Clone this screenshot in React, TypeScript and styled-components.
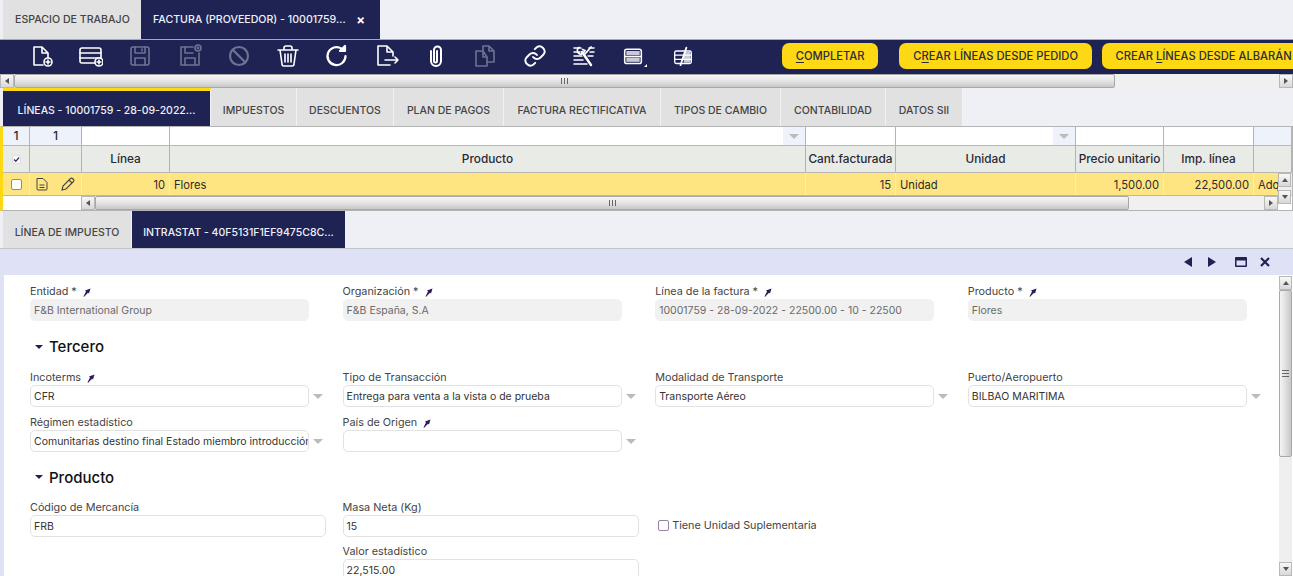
import React from 'react'
import styled, { createGlobalStyle } from 'styled-components'

const navy = '#1f2353'
const yellow = '#fdd813'
const gridCols = '27px 52px 88px 636px 90px 180px 88px 90px 1fr'

const Global = createGlobalStyle`
  html, body { margin: 0; padding: 0; height: 100%; overflow: hidden; background: #fff; }
  body { font-family: Inter, "Open Sans", "Liberation Sans", sans-serif; font-size: 11px; color: #3a3a3a; }
  * { box-sizing: border-box; }
`

const Page = styled.div`
  width: 1293px;
  height: 576px;
  overflow: hidden;
  background: #eef0f6;
  display: flex;
  flex-direction: column;
`

// pestañas de arriba
const TopTabs = styled.div`
  height: 39px;
  padding-left: 3px;
  display: flex;
  flex: none;
`
const TopTab = styled.div<{ $active?: boolean }>`
  height: 39px;
  padding: 0 12px;
  width: ${(p) => (p.$active ? '239px' : '138px')};
  display: flex;
  align-items: center;
  justify-content: space-between;
  font-size: 10.6px;
  font-weight: 500;
  white-space: nowrap;
  background: ${(p) => (p.$active ? navy : '#e1e1e1')};
  color: ${(p) => (p.$active ? '#f0f0f8' : '#444')};
`
const CloseMark = styled.span`
  font-size: 13px;
  font-weight: 700;
  color: #fff;
  margin-right: 3px;
`

const Toolbar = styled.div`
  height: 35px;
  flex: none;
  background: ${navy};
  border-top: 1px solid #aaa;
  display: flex;
  align-items: center;
  padding: 0 0 2px 17px;
  overflow: hidden;
`
const ToolIcon = styled.div<{ $off?: boolean }>`
  width: 49.3px;
  flex: none;
  display: flex;
  justify-content: center;
  color: ${(p) => (p.$off ? '#6f7290' : '#fff')};
  position: relative;
`
const Corner = styled.i`
  position: absolute;
  right: 11px;
  bottom: -1px;
  border-style: solid;
  border-width: 0 0 3px 3px;
  border-color: transparent transparent #fff transparent;
`
const ToolButtons = styled.div`
  margin-left: 75px;
  display: flex;
  flex: none;
`
const ActionBtn = styled.div<{ $w: number; $gap: number }>`
  width: ${(p) => p.$w}px;
  margin-right: ${(p) => p.$gap}px;
  height: 26px;
  flex: none;
  border-radius: 7px;
  background: ${yellow};
  color: #2c2c3e;
  font-size: 11.2px;
  font-weight: 500;
  display: flex;
  align-items: center;
  justify-content: center;
  white-space: nowrap;
  u { text-underline-offset: 2px; }
`

// barras de scroll clasicas
const HBar = styled.div<{ $left?: number }>`
  height: 14px;
  flex: none;
  margin-left: ${(p) => p.$left || 0}px;
  display: flex;
  background: #f0f0f0;
`
const ScrollBtn = styled.div`
  width: 14px;
  height: 14px;
  flex: none;
  background: linear-gradient(#f8f8f8, #d8d8d8);
  border: 1px solid #b8b8b8;
  display: flex;
  align-items: center;
  justify-content: center;
`
const Arrow = styled.i<{ $dir: 'l' | 'r' | 'u' | 'd' }>`
  width: 0;
  height: 0;
  border-style: solid;
  border-color: transparent;
  ${(p) => (p.$dir === 'l' ? 'border-width: 3px 4px 3px 0; border-right-color: #555;' : '')}
  ${(p) => (p.$dir === 'r' ? 'border-width: 3px 0 3px 4px; border-left-color: #555;' : '')}
  ${(p) => (p.$dir === 'u' ? 'border-width: 0 3px 4px 3px; border-bottom-color: #555;' : '')}
  ${(p) => (p.$dir === 'd' ? 'border-width: 4px 3px 0 3px; border-top-color: #555;' : '')}
`
const HThumb = styled.div<{ $w: number }>`
  width: ${(p) => p.$w}px;
  flex: none;
  height: 14px;
  background: linear-gradient(#f6f6f6, #e6e6e6 45%, #c8c8c8);
  border: 1px solid #a8a8a8;
  border-radius: 2px;
  display: flex;
  align-items: center;
  justify-content: center;
`
const HGrip = styled.span`
  width: 7px;
  height: 6px;
  background: repeating-linear-gradient(90deg, #666 0 1px, transparent 1px 3px);
`
const Fill = styled.div`
  flex: 1;
  min-width: 0;
`
const VBar = styled.div<{ $h: number; $top: number }>`
  position: absolute;
  right: 1px;
  top: ${(p) => p.$top}px;
  width: 13px;
  height: ${(p) => p.$h}px;
  display: flex;
  flex-direction: column;
  background: #efefef;
`
const VBtn = styled(ScrollBtn)`
  width: 13px;
`
const VThumb = styled.div<{ $h: number }>`
  height: ${(p) => p.$h}px;
  flex: none;
  background: linear-gradient(90deg, #f4f4f4, #e2e2e2 45%, #c8c8c8);
  border: 1px solid #a8a8a8;
  border-radius: 2px;
  display: flex;
  align-items: center;
  justify-content: center;
`
const VGrip = styled.span`
  width: 7px;
  height: 7px;
  background: repeating-linear-gradient(#666 0 1px, transparent 1px 3px);
`

// pestañas del detalle
const TabStrip = styled.div<{ $h: number }>`
  height: ${(p) => p.$h}px;
  flex: none;
  padding-left: 3px;
  display: flex;
`
const DocTab = styled.div<{ $active?: boolean; $marked?: boolean; $w: number }>`
  width: ${(p) => p.$w}px;
  display: flex;
  align-items: center;
  justify-content: center;
  padding-top: ${(p) => (p.$marked ? 3 : 6)}px;
  font-size: 10.5px;
  font-weight: 500;
  white-space: nowrap;
  border-right: 1px solid #f2f2f6;
  background: ${(p) => (p.$active ? navy : '#e1e1e1')};
  color: ${(p) => (p.$active ? '#f0f0f8' : '#444')};
  border-top: ${(p) => (p.$marked ? `3px solid ${yellow}` : 'none')};
`

const GridWrap = styled.div`
  height: 85px;
  flex: none;
  border-left: 3px solid ${yellow};
  border-top: 1px solid #b4b4b4;
  border-bottom: 1px solid #b4b4b4;
  border-right: 1px solid #b4b4b4;
  background: #fff;
  position: relative;
  display: flex;
  flex-direction: column;
`
const GridRow = styled.div<{ $h: number; $bg: string }>`
  display: grid;
  grid-template-columns: ${gridCols};
  height: ${(p) => p.$h}px;
  flex: none;
  background: ${(p) => p.$bg};
  border-bottom: 1px solid #b8b8b0;
`
const FilterCell = styled.div<{ $bg?: string; $center?: boolean }>`
  background: ${(p) => p.$bg || '#fff'};
  border-right: 1px solid #b4b4ac;
  color: #223;
  font-size: 11.4px;
  font-weight: 500;
  display: flex;
  align-items: center;
  justify-content: ${(p) => (p.$center ? 'center' : 'flex-end')};
`
const FilterDrop = styled.span`
  width: 22px;
  height: 100%;
  background: #eef2fa;
  display: flex;
  align-items: center;
  justify-content: center;
`
const DropArrow = styled.i`
  width: 0;
  height: 0;
  border-style: solid;
  border-width: 5px 5px 0 5px;
  border-color: #bbb transparent transparent transparent;
`
const HeadCell = styled.div`
  border-right: 1px solid #b4b4ac;
  display: flex;
  align-items: center;
  justify-content: center;
  font-size: 11.8px;
  font-weight: 500;
  color: #2a2a33;
  white-space: nowrap;
  overflow: hidden;
`
const RowCell = styled.div<{ $right?: boolean }>`
  border-right: 1px solid #ffeeb0;
  display: flex;
  align-items: center;
  justify-content: ${(p) => (p.$right ? 'flex-end' : 'flex-start')};
  padding: 1px 4px 0;
  font-size: 11.2px;
  color: #2c2c2c;
  white-space: nowrap;
  overflow: hidden;
`
const RowIcons = styled(RowCell)`
  gap: 13px;
  padding: 0 0 0 6px;
`
const CheckCell = styled(RowCell)`
  padding: 0 0 0 8px;
`
const Check = styled.span<{ $small?: boolean }>`
  width: ${(p) => (p.$small ? 9 : 11)}px;
  height: ${(p) => (p.$small ? 9 : 11)}px;
  flex: none;
  display: flex;
  align-items: center;
  justify-content: center;
  background: #fff;
  border: 1px solid ${(p) => (p.$small ? '#ddd' : '#9a80a8')};
  border-radius: 2px;
`
const GridBottom = styled.div`
  display: flex;
  height: 14px;
  flex: none;
`
const GridScroll = styled(HBar)`
  flex: 1;
  margin-right: 14px;
`

const DetailHead = styled.div`
  height: 27px;
  flex: none;
  background: #dfe1f6;
  border-top: 1px solid #c4c4cc;
  display: flex;
  align-items: center;
  justify-content: flex-end;
  gap: 16px;
  padding-right: 23px;
  color: ${navy};
`
const HeadArrow = styled.i<{ $dir: 'l' | 'r' }>`
  width: 0;
  height: 0;
  border-style: solid;
  border-color: transparent;
  ${(p) =>
    p.$dir === 'l'
      ? `border-width: 5px 8px 5px 0; border-right-color: ${navy};`
      : `border-width: 5px 0 5px 8px; border-left-color: ${navy};`}
`
const WinIcon = styled.svg`
  margin-left: 3px;
`
const CloseIcon = styled.svg`
  margin-left: -3px;
`
const FormPane = styled.div`
  flex: 1;
  min-height: 0;
  border-left: 4px solid #dfe1f6;
  background: #fff;
  position: relative;
  padding: 8px 0 0 26px;
  overflow: hidden;
`
const FieldGrid = styled.div<{ $row?: number }>`
  display: grid;
  grid-template-columns: repeat(4, 312.6px);
  grid-auto-rows: ${(p) => p.$row || 45}px;
`
const Field = styled.div`
  display: flex;
  flex-direction: column;
`
const Label = styled.label`
  height: 16px;
  padding-top: 2px;
  line-height: 14px;
  font-size: 10.8px;
  color: #444;
  white-space: nowrap;
  display: flex;
  align-items: center;
  gap: 5px;
`
const Control = styled.div<{ $wide?: boolean; $ro?: boolean }>`
  width: ${(p) => (p.$wide ? 296 : 279)}px;
  height: 22px;
  flex: none;
  border-radius: 5px;
  border: 1px solid ${(p) => (p.$ro ? '#f1f1f1' : '#e2e2e2')};
  background: ${(p) => (p.$ro ? '#f1f1f1' : '#fff')};
  color: ${(p) => (p.$ro ? '#6a6a6a' : '#333')};
  font-size: 10.5px;
  padding: 0 3px;
  display: flex;
  align-items: center;
  white-space: nowrap;
  overflow: hidden;
`
const ControlRow = styled.div`
  display: flex;
  align-items: center;
  gap: 4px;
`
const Drop = styled.span`
  display: flex;
  align-items: center;
`
const Section = styled.div<{ $h: number }>`
  height: ${(p) => p.$h}px;
  display: flex;
  align-items: center;
  gap: 6px;
  padding: 0 0 4px 5px;
  font-size: 15px;
  font-weight: 500;
  color: #111;
`
const SectionArrow = styled.i`
  width: 0;
  height: 0;
  border-style: solid;
  border-width: 4px 4px 0 4px;
  border-color: #2a1a55 transparent transparent transparent;
`
const CheckField = styled.div`
  display: flex;
  align-items: center;
  gap: 3px;
  padding: 8px 0 0 3px;
  font-size: 10.8px;
  color: #444;
`

const Svg = ({ children, w = 24, h = 24, sw = 1.6 }: any) => (
  <svg width={w} height={h} viewBox="0 0 24 24" fill="none" stroke="currentColor" strokeWidth={sw} strokeLinecap="round" strokeLinejoin="round">
    {children}
  </svg>
)
const Plus = ({ x, y }: { x: number; y: number }) => (
  <>
    <circle cx={x} cy={y} r="4" fill={navy} />
    <path d={`M${x - 2} ${y}h4M${x} ${y - 2}v4`} />
  </>
)
const NewDoc = () => (
  <Svg>
    <path d="M13 21H4V3h8l6 6v5M12 3v6h6" />
    <Plus x={18} y={18} />
  </Svg>
)
const NewRow = () => (
  <Svg>
    <rect x="1" y="4" width="21" height="15" rx="2" />
    <path d="M1 9h21M1 14h21" />
    <Plus x={20} y={18} />
  </Svg>
)
const Save = () => (
  <Svg>
    <rect x="3" y="3" width="18" height="18" rx="2" />
    <path d="M7 3v6h10V3M7 21v-7h10v7M14 5v2" />
  </Svg>
)
const SaveClose = () => (
  <Svg>
    <path d="M15 3H3v18h18V9" />
    <path d="M7 3v6h8M7 21v-7h10v7" />
    <circle cx="20" cy="4" r="3" />
    <circle cx="20" cy="4" r=".6" />
  </Svg>
)
const Forbid = () => (
  <Svg sw={2.2}>
    <circle cx="12" cy="12" r="9" />
    <path d="M6 6l12 12" />
  </Svg>
)
const Trash = () => (
  <Svg>
    <path d="M2 6h20M8 6V4a2 2 0 0 1 2-2h4a2 2 0 0 1 2 2v2M4 6l2 14a2 2 0 0 0 2 2h8a2 2 0 0 0 2-2l2-14M9 10v8M12 10v8M15 10v8" />
  </Svg>
)
const Refresh = () => (
  <Svg sw={2.2}>
    <path d="M20.5 12a9 9 0 1 1-4-7.4" />
    <path d="M20 2v5h-5z" fill="currentColor" />
  </Svg>
)
const Export = () => (
  <Svg>
    <path d="M15 21H3V2h9l6 6v4M12 2v6h6M10 16h13M20 13l3 3-3 3" />
  </Svg>
)
const Clip = () => (
  <Svg sw={2}>
    <path d="M7 7v10a5 5 0 0 0 10 0V6a3.5 3.5 0 0 0-7 0v11a1.5 1.5 0 0 0 3 0V7" />
  </Svg>
)
const Copy = () => (
  <Svg>
    <path d="M10 7H3v15h11v-9zM10 7v6h4M10 7V2h6l5 5v11h-7M16 2v5h5" />
  </Svg>
)
const Link = () => (
  <Svg sw={1.9}>
    <path d="M10 13a5 5 0 0 0 7.5.5l3-3a5 5 0 0 0-7-7l-1.7 1.7" />
    <path d="M14 11a5 5 0 0 0-7.5-.5l-3 3a5 5 0 0 0 7 7l1.7-1.7" />
  </Svg>
)
const Tools = () => (
  <Svg sw={1.5}>
    <path d="M2 4h7M2 8h6M2 12h8M2 16h9M2 20h13M17 4h5M18 8h4M16 12h5" />
    <path d="M10 8l9 13" strokeWidth="3.4" strokeLinecap="butt" stroke={navy} />
    <path d="M10 8l9 13" strokeWidth="2.4" />
    <path d="M7 3.5a3.5 3.5 0 0 0 4 6l2-3-2.5-1" strokeWidth="1.8" />
    <path d="M19 3l-6 7" strokeWidth="1.8" />
  </Svg>
)
const Layout = () => (
  <Svg w={20} h={20} sw={1.8}>
    <rect x="2" y="4" width="20" height="17" rx="2.5" />
    <rect x="4" y="6" width="16" height="5" fill="#c9cad8" stroke="none" />
    <rect x="4" y="14" width="16" height="5" fill="#c9cad8" stroke="none" />
    <path d="M2 12.5h20" />
  </Svg>
)
const NoteOff = () => (
  <Svg w={20} h={20} sw={1.6}>
    <rect x="2" y="6" width="20" height="15" rx="2" />
    <rect x="13" y="7" width="8" height="13" fill="#c9cad8" stroke="none" />
    <path d="M2 11h20M2 16h20" />
    <path d="M16 2L9 23" strokeWidth="2.2" />
  </Svg>
)
const Pin = () => (
  <svg width="9" height="9" viewBox="0 0 9 9">
    <path d="M1.5 8.5L4 3.5 3 2.5 8.5 .5 7 5.5 6 4.7 2.2 8.8z" fill="#2c1a5a" />
  </svg>
)
const Tick = () => (
  <svg width="7" height="7" viewBox="0 0 7 7" fill="none" stroke="#3a2a60" strokeWidth="1.3">
    <path d="M1 3.5l1.8 1.8L6 1.5" />
  </svg>
)
const RowDoc = () => (
  <svg width="12" height="14" viewBox="0 0 12 14" fill="none" stroke="#444" strokeWidth="1">
    <path d="M1 1.5h6l4 4v6.5a1 1 0 0 1-1 1H2a1 1 0 0 1-1-1zM3.5 8h5M3.5 10.5h5" />
  </svg>
)
const RowPen = () => (
  <svg width="14" height="14" viewBox="0 0 14 14" fill="none" stroke="#444" strokeWidth="1.1">
    <path d="M1 13l1-4 7.5-7.5a1.4 1.4 0 0 1 2 0l1 1a1.4 1.4 0 0 1 0 2L5 12zM8 3l3 3" />
  </svg>
)

const ScrollH = ({ thumb }: { thumb: number }) => (
  <>
    <ScrollBtn><Arrow $dir="l" /></ScrollBtn>
    <HThumb $w={thumb}><HGrip /></HThumb>
    <Fill />
    <ScrollBtn><Arrow $dir="r" /></ScrollBtn>
  </>
)

const Combo = ({ value }: { value: string }) => (
  <ControlRow>
    <Control>{value}</Control>
    <Drop><DropArrow /></Drop>
  </ControlRow>
)

export default function App() {
  return (
    <Page>
      <Global />
      <TopTabs>
        <TopTab>ESPACIO DE TRABAJO</TopTab>
        <TopTab $active>
          FACTURA (PROVEEDOR) - 10001759...
          <CloseMark>×</CloseMark>
        </TopTab>
      </TopTabs>

      <Toolbar>
        <ToolIcon><NewDoc /></ToolIcon>
        <ToolIcon><NewRow /></ToolIcon>
        <ToolIcon $off><Save /></ToolIcon>
        <ToolIcon $off><SaveClose /></ToolIcon>
        <ToolIcon $off><Forbid /></ToolIcon>
        <ToolIcon><Trash /></ToolIcon>
        <ToolIcon><Refresh /></ToolIcon>
        <ToolIcon><Export /></ToolIcon>
        <ToolIcon><Clip /></ToolIcon>
        <ToolIcon $off><Copy /></ToolIcon>
        <ToolIcon><Link /></ToolIcon>
        <ToolIcon><Tools /></ToolIcon>
        <ToolIcon><Layout /><Corner /></ToolIcon>
        <ToolIcon><NoteOff /></ToolIcon>
        <ToolButtons>
          <ActionBtn $w={96} $gap={21}><span><u>C</u>OMPLETAR</span></ActionBtn>
          <ActionBtn $w={193} $gap={10}><span>C<u>R</u>EAR LÍNEAS DESDE PEDIDO</span></ActionBtn>
          <ActionBtn $w={203} $gap={0}><span>CREAR <u>L</u>ÍNEAS DESDE ALBARÁN</span></ActionBtn>
        </ToolButtons>
      </Toolbar>

      <HBar><ScrollH thumb={1101} /></HBar>

      <TabStrip $h={38}>
        <DocTab $active $marked $w={208}>LÍNEAS - 10001759 - 28-09-2022...</DocTab>
        <DocTab $w={86}>IMPUESTOS</DocTab>
        <DocTab $w={97}>DESCUENTOS</DocTab>
        <DocTab $w={110}>PLAN DE PAGOS</DocTab>
        <DocTab $w={157}>FACTURA RECTIFICATIVA</DocTab>
        <DocTab $w={120}>TIPOS DE CAMBIO</DocTab>
        <DocTab $w={105}>CONTABILIDAD</DocTab>
        <DocTab $w={77}>DATOS SII</DocTab>
      </TabStrip>

      <GridWrap>
        <GridRow $h={19} $bg="#fff">
          <FilterCell $bg="#eef2fa" $center>1</FilterCell>
          <FilterCell $bg="#eef2fa" $center>1</FilterCell>
          <FilterCell />
          <FilterCell><FilterDrop><DropArrow /></FilterDrop></FilterCell>
          <FilterCell />
          <FilterCell><FilterDrop><DropArrow /></FilterDrop></FilterCell>
          <FilterCell />
          <FilterCell />
          <FilterCell $bg="#eef2fa" />
        </GridRow>
        <GridRow $h={27} $bg="#e9ebe6">
          <HeadCell><Check $small><Tick /></Check></HeadCell>
          <HeadCell />
          <HeadCell>Línea</HeadCell>
          <HeadCell>Producto</HeadCell>
          <HeadCell>Cant.facturada</HeadCell>
          <HeadCell>Unidad</HeadCell>
          <HeadCell>Precio unitario</HeadCell>
          <HeadCell>Imp. línea</HeadCell>
          <HeadCell />
        </GridRow>
        <GridRow $h={23} $bg="#ffe482">
          <CheckCell><Check /></CheckCell>
          <RowIcons><RowDoc /><RowPen /></RowIcons>
          <RowCell $right>10</RowCell>
          <RowCell>Flores</RowCell>
          <RowCell $right>15</RowCell>
          <RowCell>Unidad</RowCell>
          <RowCell $right>1,500.00</RowCell>
          <RowCell $right>22,500.00</RowCell>
          <RowCell>Adq</RowCell>
        </GridRow>
        <GridBottom>
          <GridScroll $left={78}><ScrollH thumb={1034} /></GridScroll>
        </GridBottom>
        <VBar $h={31} $top={46}>
          <VBtn><Arrow $dir="u" /></VBtn>
          <Fill />
          <VBtn><Arrow $dir="d" /></VBtn>
        </VBar>
      </GridWrap>

      <TabStrip $h={37}>
        <DocTab $w={129}>LÍNEA DE IMPUESTO</DocTab>
        <DocTab $active $w={214}>INTRASTAT - 40F5131F1EF9475C8C...</DocTab>
      </TabStrip>

      <DetailHead>
        <HeadArrow $dir="l" />
        <HeadArrow $dir="r" />
        <WinIcon width="12" height="10" viewBox="0 0 12 10"><path d="M0 1a1 1 0 0 1 1-1h10a1 1 0 0 1 1 1v8a1 1 0 0 1-1 1H1a1 1 0 0 1-1-1zM1.5 3.5v5h9v-5z" fill="currentColor" fillRule="evenodd" /></WinIcon>
        <CloseIcon width="10" height="10" viewBox="0 0 10 10" stroke="currentColor" strokeWidth="2.2"><path d="M1 1l8 8M9 1l-8 8" /></CloseIcon>
      </DetailHead>

      <FormPane>
        <FieldGrid>
          <Field><Label>Entidad *<Pin /></Label><Control $ro>F&amp;B International Group</Control></Field>
          <Field><Label>Organización *<Pin /></Label><Control $ro>F&amp;B España, S.A</Control></Field>
          <Field><Label>Línea de la factura *<Pin /></Label><Control $ro>10001759 - 28-09-2022 - 22500.00 - 10 - 22500</Control></Field>
          <Field><Label>Producto *<Pin /></Label><Control $ro>Flores</Control></Field>
        </FieldGrid>
        <Section $h={41}><SectionArrow />Tercero</Section>
        <FieldGrid>
          <Field><Label>Incoterms<Pin /></Label><Combo value="CFR" /></Field>
          <Field><Label>Tipo de Transacción</Label><Combo value="Entrega para venta a la vista o de prueba" /></Field>
          <Field><Label>Modalidad de Transporte</Label><Combo value="Transporte Aéreo" /></Field>
          <Field><Label>Puerto/Aeropuerto</Label><Combo value="BILBAO MARITIMA" /></Field>
          <Field><Label>Régimen estadístico</Label><Combo value="Comunitarias destino final Estado miembro introducción" /></Field>
          <Field><Label>País de Origen<Pin /></Label><Combo value="" /></Field>
        </FieldGrid>
        <Section $h={40}><SectionArrow />Producto</Section>
        <FieldGrid $row={44}>
          <Field><Label>Código de Mercancía</Label><Control $wide>FRB</Control></Field>
          <Field><Label>Masa Neta (Kg)</Label><Control $wide>15</Control></Field>
          <CheckField><Check />Tiene Unidad Suplementaria</CheckField>
          <div />
          <div />
          <Field><Label>Valor estadístico</Label><Control $wide>22,515.00</Control></Field>
        </FieldGrid>
        <VBar $h={300} $top={1}>
          <VBtn><Arrow $dir="u" /></VBtn>
          <VThumb $h={167}><VGrip /></VThumb>
          <Fill />
          <VBtn><Arrow $dir="d" /></VBtn>
        </VBar>
      </FormPane>
    </Page>
  )
}
